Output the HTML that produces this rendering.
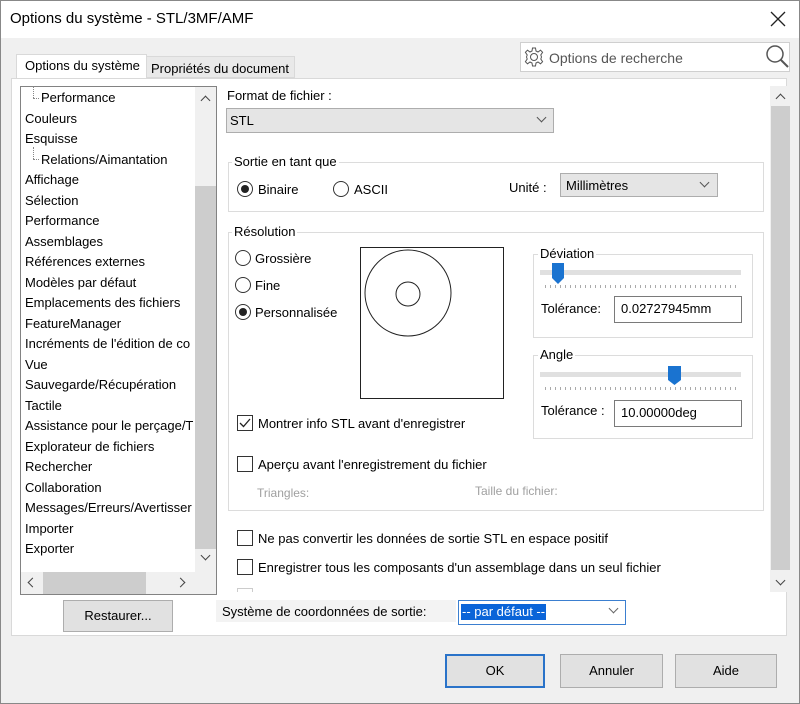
<!DOCTYPE html>
<html><head><meta charset="utf-8"><style>
*{box-sizing:border-box;margin:0;padding:0}
body{width:800px;height:704px;background:#f0f0f0;font-family:"Liberation Sans",sans-serif;font-size:13px;color:#000;position:relative;overflow:hidden}
.a{position:absolute}
.t{position:absolute;white-space:nowrap;line-height:16px}
.grp{position:absolute;border:1px solid #dcdcdc}
.lg{position:absolute;background:#fff;padding:0 2px;line-height:16px;top:-9px;left:4px}
.radio{position:absolute;width:16px;height:16px;border:1px solid #333;border-radius:50%;background:#fff}
.radio.on::after{content:"";position:absolute;left:3px;top:3px;width:8px;height:8px;border-radius:50%;background:#222}
.cb{position:absolute;width:16px;height:16px;border:1px solid #333;background:#fff}
.dd{position:absolute;background:#e5e5e5;border:1px solid #adadad}
.chev{position:absolute;width:7px;height:7px;border-right:1px solid #555;border-bottom:1px solid #555;transform:rotate(45deg)}
.btn{position:absolute;background:#e1e1e1;border:1px solid #adadad;text-align:center;line-height:30px}
.inp{position:absolute;background:#fff;border:1px solid #7a7a7a;padding-left:6px;line-height:24px}
.ticks{position:absolute;height:3px;background:repeating-linear-gradient(90deg,#aaa 0 1px,transparent 1px 5px)}
</style></head><body>
<div class="a" style="left:0;top:0;width:800px;height:704px;border:1px solid #888"></div>
<div class="a" style="left:1px;top:1px;width:798px;height:37px;background:#fff"></div>
<div class="t" style="left:10px;top:11px;font-size:15px">Options du système - STL/3MF/AMF</div>
<svg class="a" style="left:770px;top:11px" width="16" height="16"><path d="M1 1L15 15M15 1L1 15" stroke="#222" stroke-width="1.3"/></svg>

<div class="a" style="left:520px;top:42px;width:270px;height:30px;background:#fff;border:1px solid #cfcfcf"></div>
<svg class="a" style="left:522px;top:45px" width="24" height="24" viewBox="0 0 24 24"><circle cx="12" cy="12" r="3.5" fill="none" stroke="#555"/><path d="M10.5 3h3l.5 3 2 1 2.5-1.8 2.1 2.1L18.8 10l.7 2-.7 2 1.8 2.7-2.1 2.1L16 17l-2 1-.5 3h-3l-.5-3-2-1-2.5 1.8-2.1-2.1L5.2 14l-.7-2 .7-2-1.8-2.7 2.1-2.1L8 7l2-1z" fill="none" stroke="#555"/></svg>
<div class="t" style="left:549px;top:50px;color:#555;font-size:14px">Options de recherche</div>
<svg class="a" style="left:764px;top:43px" width="26" height="26"><circle cx="11" cy="11" r="8" fill="none" stroke="#555" stroke-width="1.5"/><path d="M17 17L24 24" stroke="#555" stroke-width="2"/></svg>

<div class="a" style="left:146px;top:56px;width:149px;height:22px;background:#e9e9e9;border:1px solid #d9d9d9"></div>
<div class="t" style="left:151px;top:61px">Propriétés du document</div>
<div class="a" style="left:16px;top:54px;width:131px;height:26px;background:#fff;border:1px solid #d9d9d9;border-bottom:none"></div>
<div class="t" style="left:25px;top:58px">Options du système</div>

<div class="a" style="left:11px;top:78px;width:776px;height:558px;background:#fff;border:1px solid #d9d9d9"></div>
<div class="a" style="left:17px;top:79px;width:129px;height:2px;background:#fff"></div>

<!-- tree -->
<div class="a" style="left:20px;top:86px;width:197px;height:509px;border:1px solid #828282;background:#fff;overflow:hidden">
<div class="a" style="left:174px;top:0;width:21px;height:485px;background:#f0f0f0"></div>
<div class="a" style="left:174px;top:99px;width:21px;height:363px;background:#cdcdcd"></div>
<div class="a" style="left:0;top:485px;width:195px;height:22px;background:#f0f0f0"></div>
<div class="a" style="left:22px;top:485px;width:103px;height:22px;background:#cdcdcd"></div>
<div class="chev" style="left:181px;top:10px;transform:rotate(225deg);border-color:#444"></div>
<div class="chev" style="left:181px;top:465px;border-color:#444"></div>
<div class="chev" style="left:8px;top:492px;transform:rotate(135deg);border-color:#444"></div>
<div class="chev" style="left:156px;top:492px;transform:rotate(-45deg);border-color:#444"></div>
</div>
<div class="a" style="left:33px;top:86px;width:1px;height:12px;border-left:1px dotted #888"></div>
<div class="a" style="left:33px;top:98px;width:6px;border-top:1px dotted #888"></div>
<div class="a" style="left:33px;top:147px;width:1px;height:12px;border-left:1px dotted #888"></div>
<div class="a" style="left:33px;top:159px;width:6px;border-top:1px dotted #888"></div>
<div class="a" style="left:25px;top:88px;line-height:20.5px;white-space:nowrap;width:170px;overflow:hidden">
<div style="padding-left:16px">Performance</div><div>Couleurs</div><div>Esquisse</div><div style="padding-left:16px">Relations/Aimantation</div><div>Affichage</div><div>Sélection</div><div>Performance</div><div>Assemblages</div><div>Références externes</div><div>Modèles par défaut</div><div>Emplacements des fichiers</div><div>FeatureManager</div><div>Incréments de l'édition de co</div><div>Vue</div><div>Sauvegarde/Récupération</div><div>Tactile</div><div>Assistance pour le perçage/T</div><div>Explorateur de fichiers</div><div>Rechercher</div><div>Collaboration</div><div>Messages/Erreurs/Avertisser</div><div>Importer</div><div>Exporter</div>
</div>

<!-- right scrollbar -->
<div class="a" style="left:770px;top:86px;width:20px;height:506px;background:#f0f0f0"></div>
<div class="a" style="left:771px;top:106px;width:19px;height:464px;background:#cdcdcd"></div>
<div class="chev" style="left:777px;top:95px;transform:rotate(225deg);border-color:#444"></div>
<div class="chev" style="left:777px;top:577px;border-color:#444"></div>

<div class="t" style="left:227px;top:88px">Format de fichier :</div>
<div class="dd" style="left:226px;top:108px;width:328px;height:25px"></div>
<div class="t" style="left:230px;top:113px">STL</div>
<div class="chev" style="left:538px;top:114px"></div>

<div class="grp" style="left:228px;top:162px;width:536px;height:50px"><div class="lg" style="left:3px">Sortie en tant que</div></div>
<div class="radio on" style="left:237px;top:181px"></div><div class="t" style="left:258px;top:182px">Binaire</div>
<div class="radio" style="left:333px;top:181px"></div><div class="t" style="left:354px;top:182px">ASCII</div>
<div class="t" style="left:509px;top:180px">Unité :</div>
<div class="dd" style="left:560px;top:173px;width:158px;height:24px"></div>
<div class="t" style="left:566px;top:178px">Millimètres</div>
<div class="chev" style="left:701px;top:179px"></div>

<div class="grp" style="left:228px;top:232px;width:536px;height:279px"><div class="lg" style="left:3px">Résolution</div></div>
<div class="radio" style="left:235px;top:250px"></div><div class="t" style="left:255px;top:251px">Grossière</div>
<div class="radio" style="left:235px;top:277px"></div><div class="t" style="left:255px;top:278px">Fine</div>
<div class="radio on" style="left:235px;top:304px"></div><div class="t" style="left:255px;top:305px">Personnalisée</div>
<svg class="a" style="left:360px;top:247px" width="145" height="153"><rect x="0.5" y="0.5" width="143" height="151" fill="#fff" stroke="#222"/><circle cx="48" cy="46" r="43" fill="none" stroke="#222"/><circle cx="48" cy="47" r="12" fill="none" stroke="#222"/></svg>

<div class="grp" style="left:533px;top:254px;width:220px;height:84px"><div class="lg">Déviation</div></div>
<div class="a" style="left:540px;top:270px;width:201px;height:5px;background:#e0e0e0"></div>
<svg class="a" style="left:552px;top:263px" width="12" height="21"><path d="M0 0H12V15L6 21L0 15Z" fill="#1a73d0"/></svg>
<div class="ticks" style="left:545px;top:285px;width:195px"></div>
<div class="t" style="left:541px;top:301px">Tolérance:</div>
<div class="inp" style="left:614px;top:296px;width:128px;height:27px">0.02727945mm</div>

<div class="grp" style="left:533px;top:355px;width:220px;height:84px"><div class="lg">Angle</div></div>
<div class="a" style="left:540px;top:372px;width:201px;height:5px;background:#e0e0e0"></div>
<svg class="a" style="left:668px;top:366px" width="13" height="19"><path d="M0 0H13V14L6.5 19L0 14Z" fill="#1a73d0"/></svg>
<div class="ticks" style="left:545px;top:387px;width:195px"></div>
<div class="t" style="left:541px;top:403px">Tolérance :</div>
<div class="inp" style="left:614px;top:400px;width:128px;height:27px">10.00000deg</div>

<div class="cb" style="left:237px;top:415px"></div>
<svg class="a" style="left:237px;top:415px" width="16" height="16"><path d="M3 8L6.5 11.5L13 4" fill="none" stroke="#222" stroke-width="1.3"/></svg>
<div class="t" style="left:258px;top:416px">Montrer info STL avant d'enregistrer</div>
<div class="cb" style="left:237px;top:456px"></div>
<div class="t" style="left:258px;top:457px">Aperçu avant l'enregistrement du fichier</div>
<div class="t" style="left:257px;top:485px;color:#a0a0a0;font-size:12px">Triangles:</div>
<div class="t" style="left:475px;top:483px;color:#a0a0a0;font-size:12px">Taille du fichier:</div>

<div class="cb" style="left:237px;top:530px"></div>
<div class="t" style="left:258px;top:531px">Ne pas convertir les données de sortie STL en espace positif</div>
<div class="cb" style="left:237px;top:559px"></div>
<div class="t" style="left:258px;top:560px">Enregistrer tous les composants d'un assemblage dans un seul fichier</div>
<div class="a" style="left:237px;top:588px;width:16px;height:4px;border:1px solid #ccc;border-bottom:none"></div>

<div class="btn" style="left:63px;top:600px;width:110px;height:32px">Restaurer...</div>
<div class="a" style="left:216px;top:600px;width:240px;height:22px;background:#f3f3f3"></div>
<div class="t" style="left:222px;top:604px">Système de coordonnées de sortie:</div>
<div class="a" style="left:458px;top:600px;width:168px;height:25px;background:#fff;border:1px solid #3b7fd0"></div>
<div class="t" style="left:461px;top:604px;background:#0a64d8;color:#fff;padding:0 1px">-- par défaut --</div>
<div class="chev" style="left:610px;top:605px;border-color:#666"></div>

<div class="btn" style="left:445px;top:654px;width:100px;height:34px;border:2px solid #2a73c9;line-height:30px">OK</div>
<div class="btn" style="left:560px;top:654px;width:103px;height:34px;line-height:32px">Annuler</div>
<div class="btn" style="left:675px;top:654px;width:102px;height:34px;line-height:32px">Aide</div>
</body></html>
